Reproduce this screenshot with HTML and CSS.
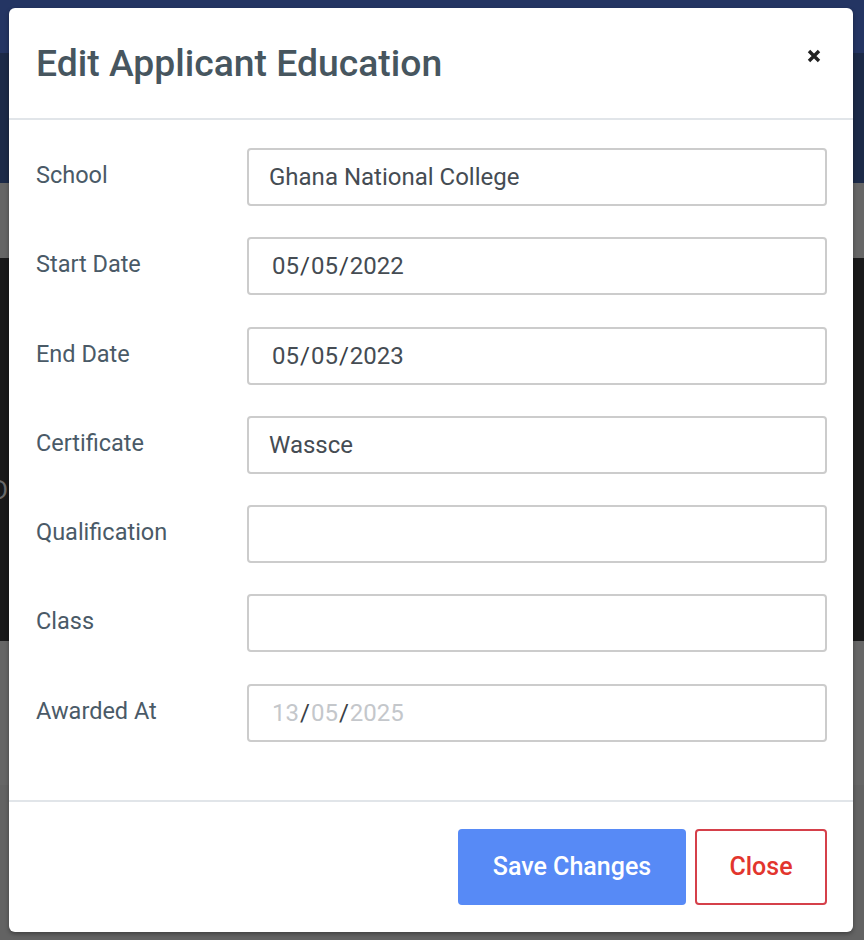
FILE: index.html
```html
<!DOCTYPE html>
<html lang="en">
<head>
<meta charset="utf-8">
<title>Edit Applicant Education</title>
<link rel="stylesheet" href="styles.css">
</head>
<body>
<div class="backdrop">
  <div class="band band-top"></div>
  <div class="band band-navy"></div>
  <div class="band band-grey"></div>
  <div class="band band-dark"><span class="hidden-letter">D</span></div>
  <div class="band band-grey2"></div>
  <div class="band band-grey3"></div>
</div>

<div class="modal">
  <div class="modal-header">
    <h4 class="modal-title">Edit Applicant Education</h4>
    <button class="close-btn" type="button" aria-label="Close">
      <svg width="14" height="14" viewBox="0 0 14 14"><path d="M2 2 L12 12 M12 2 L2 12" stroke="#222" stroke-width="3.4" stroke-linecap="butt"/></svg>
    </button>
  </div>
  <div class="modal-body">
    <div class="form-row">
      <label class="form-label">School</label>
      <div class="form-input">Ghana National College</div>
    </div>
    <div class="form-row">
      <label class="form-label">Start Date</label>
      <div class="form-input date">05<span class="sl">/</span>05<span class="sl">/</span>2022</div>
    </div>
    <div class="form-row">
      <label class="form-label">End Date</label>
      <div class="form-input date">05<span class="sl">/</span>05<span class="sl">/</span>2023</div>
    </div>
    <div class="form-row">
      <label class="form-label">Certificate</label>
      <div class="form-input">Wassce</div>
    </div>
    <div class="form-row">
      <label class="form-label">Qualification</label>
      <div class="form-input"></div>
    </div>
    <div class="form-row">
      <label class="form-label">Class</label>
      <div class="form-input"></div>
    </div>
    <div class="form-row">
      <label class="form-label">Awarded At</label>
      <div class="form-input date empty"><span class="ph">13</span><span class="sl">/</span><span class="ph">05</span><span class="sl">/</span><span class="ph">2025</span></div>
    </div>
  </div>
  <div class="modal-footer">
    <button class="btn btn-primary" type="button">Save Changes</button>
    <button class="btn btn-outline-danger" type="button">Close</button>
  </div>
</div>
</body>
</html>
```

FILE: styles.css
```css
* { box-sizing: border-box; }
html, body { margin: 0; padding: 0; }
body {
  width: 864px;
  height: 940px;
  overflow: hidden;
  position: relative;
  font-family: Roboto, "Noto Sans", "Liberation Sans", sans-serif;
  background: #636363;
}
.backdrop { display: flex; flex-direction: column; }
.band-top { height: 53px; background: #243563; }
.band-navy { height: 130px; background: #1c2a48; }
.band-grey { height: 75px; background: #666666; }
.band-dark { height: 383px; background: #19191a; display: flex; align-items: center; }
.hidden-letter { font-size: 26px; color: #6a6a6a; margin-left: -9px; margin-top: 80px; }
.band-grey2 { height: 144px; background: #666666; }
.band-grey3 { height: 155px; background: #636363; }

.modal {
  position: absolute;
  left: 9px;
  top: 8px;
  width: 844px;
  height: 924px;
  background: #fff;
  border-radius: 6px;
  box-shadow: 0 2px 4px rgba(0,0,0,.35);
  display: flex;
  flex-direction: column;
}
.modal-header {
  height: 112px;
  border-bottom: 2px solid #e1e5e9;
  display: flex;
  align-items: center;
  justify-content: space-between;
  padding: 0 32px 0 27px;
}
.modal-title {
  margin: 0;
  font-size: 37.3px;
  font-weight: 500;
  color: #47565f;
}
.close-btn {
  border: 0;
  background: none;
  padding: 0;
  margin-top: -14px;
  width: 14px;
  height: 14px;
  display: flex;
}
.modal-body {
  padding: 28px 26px 58px 27px;
  display: flex;
  flex-direction: column;
  gap: 31.3px;
}
.form-row {
  display: flex;
  align-items: center;
}
.form-label {
  width: 211px;
  font-size: 23.5px;
  color: #4a5a67;
  margin-top: -4px;
}
.form-input {
  flex: 1;
  height: 58px;
  border: 2px solid #cccccc;
  border-radius: 4px;
  padding: 0 20px;
  display: flex;
  align-items: center;
  font-size: 24px;
  color: #454c53;
}
.form-input.date { padding-left: 23px; }
.sl { padding: 0 1px; color: #3a4046; }
.ph { color: #c4c7cb; }
.modal-footer {
  flex: 1;
  border-top: 2px solid #e1e5e9;
  display: flex;
  justify-content: flex-end;
  align-items: flex-start;
  gap: 9px;
  padding: 27px 26px 0 0;
}
.btn {
  font-family: inherit;
  font-size: 25px;
  font-weight: 500;
  height: 76px;
  border-radius: 4px;
  cursor: pointer;
}
.btn-primary {
  width: 228px;
  background: #578af6;
  color: #fff;
  border: 0;
}
.btn-outline-danger {
  width: 132px;
  background: #fff;
  color: #e2352d;
  border: 2px solid #d5404a;
}
```
